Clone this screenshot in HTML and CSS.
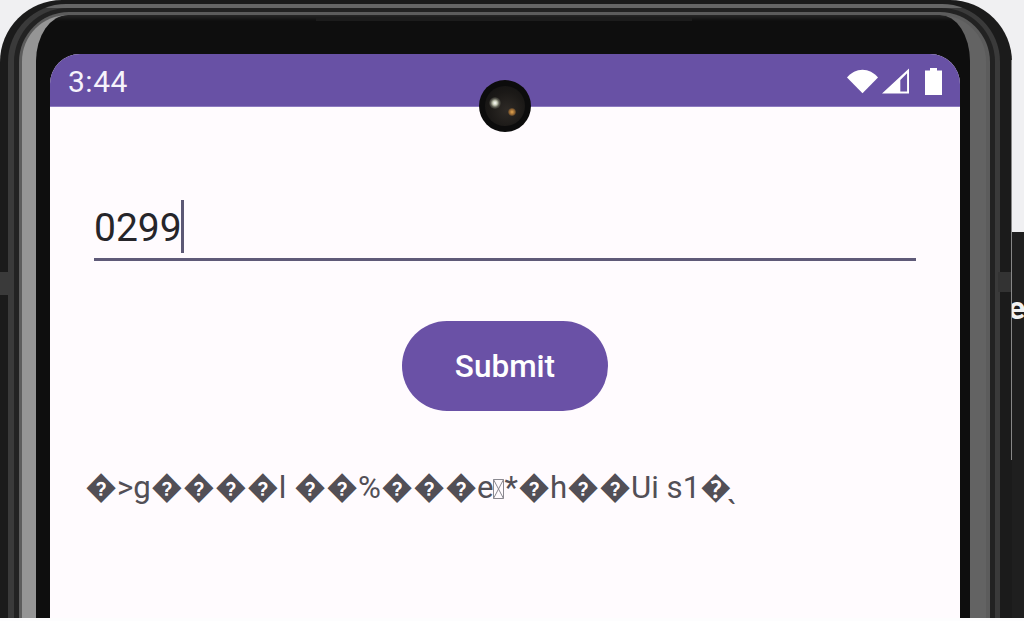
FILE: index.html
```html
<!DOCTYPE html>
<html lang="en">
<head>
<meta charset="utf-8">
<title>Submit</title>
<link rel="stylesheet" href="styles.css">
</head>
<body>
<div class="stage">
  <div class="backdrop"><span class="backdrop-text">e</span></div>
  <div class="device">
    <div class="ring ring-b">
      <div class="ring ring-c">
        <div class="ring ring-d">
          <div class="ring ring-e">
            <div class="ring ring-f">
              <div class="screen">
                <div class="status">
                  <span class="time">3:44</span>
                  <div class="status-icons">
                    <svg class="ic-wifi" viewBox="0 0 34 26"><path d="M0 8.500C4.500 3.200 10.500 0 17 0s12.500 3.200 17 8.500L17 26z"/></svg>
                    <svg class="ic-signal" viewBox="0 0 28 26"><path fill-rule="evenodd" d="M28 0v26H0zM26 5 19 12V24h7z"/></svg>
                    <svg class="ic-battery" viewBox="0 0 17 27"><path d="M5 0h7v2.500h5V27H0V2.500h5z"/></svg>
                  </div>
                </div>
                <div class="content">
                  <div class="field">
                    <span class="value">0299</span><span class="caret"></span>
                  </div>
                  <div class="actions"><button class="submit" type="button">Submit</button></div>
                  <p class="result">�&gt;g����l ��%���e<svg class="tofu" viewBox="0 0 11 20"><path d="M.5.5h10v19H.5zM.5.500l10 19M10.500.500l-10 19"/></svg>*�h��Ui s1�&#x316;</p>
                </div>
              </div>
            </div>
          </div>
        </div>
      </div>
    </div>
    <span class="side-btn side-btn-left"></span>
    <span class="side-btn side-btn-right"></span>
    <span class="top-strip"></span>
    <span class="edge-line"></span>
    <div class="camera"><span class="lens"></span><span class="glint glint-a"></span><span class="glint glint-b"></span></div>
  </div>
</div>
</body>
</html>
```
FILE: styles.css
```css
* { box-sizing: border-box; }
html, body { margin: 0; padding: 0; height: 100%; }
body { background: #fdfdfe; overflow: hidden; font-family: Roboto, "Noto Sans", "DejaVu Sans", sans-serif; }
.stage { position: relative; width: 1024px; height: 618px; overflow: hidden; background: #f0f0f2; }
.backdrop { position: absolute; right: 0; top: 232px; bottom: 0; width: 40px; background: #1f1f1f; overflow: hidden; }
.backdrop-text { position: absolute; left: 24px; top: 60px; color: #f2f2f2; font-size: 32px; font-weight: 700; line-height: 32px; }
.device { position: relative; width: 1012px; height: 760px; }
.ring { height: 100%; }
.device > .ring-b { border-radius: 62px 62px 0 0; background: #1b1b1b; padding: 4px 12px 0 8px; }
.ring-c { border-radius: 58px 58px 0 0; background: linear-gradient(180deg, #666 0, #666 4px, #3a3a3a 4px); padding: 4px 5px 0 6px; }
.ring-d { border-radius: 54px 54px 0 0; background: #222; padding: 4px 5px 0 5px; }
.ring-e { border-radius: 50px 50px 0 0; background: #5c5c5c; padding: 3px 4px 0 3px; }
.ring-f { border-radius: 46px 46px 0 0; background: linear-gradient(180deg, #262626 0, #0e0e0e 6px); border-left: 14px solid #959595; border-right: 16px solid #636363; padding: 39px 10px 0 14px; }
.screen { height: 100%; border-radius: 30px 30px 0 0; overflow: hidden; background: #fffbfe; }
.status { height: 53px; background: #6851a5; border-bottom: 1px solid #8d7bc0; display: flex; align-items: center; justify-content: space-between; padding: 0 18px 0 18px; color: #fff; }
.time { font-size: 30px; line-height: 34px; letter-spacing: .5px; color: #f6f3fb; margin-top: 3px; }
.status-icons { display: flex; align-items: center; gap: 4px; margin-top: 2px; }
.status-icons svg { display: block; fill: #fff; }
.ic-wifi { width: 31px; height: 25px; }
.ic-signal { width: 27px; height: 26px; }
.ic-battery { width: 17px; height: 27px; margin-left: 12px; }
.content { padding: 91px 44px 0; }
.field { height: 63px; display: flex; align-items: center; border-bottom: 3px solid #5f5a78; padding-bottom: 4px; }
.value { font-size: 39px; line-height: 46px; color: #26252a; margin-top: 4px; }
.caret { width: 3px; height: 53px; margin-left: -1px; background: #5c5875; }
.actions { display: flex; justify-content: center; padding-top: 60px; }
.submit { width: 206px; height: 90px; border: 0; border-radius: 45px; background: #6a51a6; color: #fff; font: 500 31.500px/36px Roboto, sans-serif; padding: 2px 0 0; }
.result { margin: 56px 0 0 -9px; font-size: 31.2px; line-height: 42px; color: #524f56; white-space: nowrap; }
.tofu { display: inline-block; width: 11px; height: 20px; fill: none; stroke: #8a8890; stroke-width: 1; vertical-align: -1px; }
.side-btn { position: absolute; top: 272px; height: 23px; background: #3a3a3a; }
.side-btn-left { left: 0; width: 8px; }
.side-btn-right { left: 998px; width: 13px; height: 20px; background: #333; }
.top-strip { position: absolute; left: 316px; top: 18px; width: 376px; height: 3px; background: #1c1c1c; }
.edge-line { position: absolute; left: 1011px; top: 60px; width: 1px; height: 400px; background: #888; }
.camera { position: absolute; left: 479px; top: 80px; width: 52px; height: 52px; border-radius: 50%; background: #0c0c0c; }
.lens { position: absolute; left: 6px; top: 6px; width: 40px; height: 40px; border-radius: 50%; background: radial-gradient(circle at 55% 60%, #2e2a26 0, #1b1917 55%, #111 100%); }
.glint { position: absolute; border-radius: 50%; }
.glint-a { left: 10px; top: 17px; width: 12px; height: 12px; background: radial-gradient(circle, #fff 0, #c8ccb8 25%, #5a5a50 50%, transparent 75%); }
.glint-b { left: 29px; top: 28px; width: 8px; height: 8px; background: radial-gradient(circle, #e8a850 0, #8a6030 50%, transparent 80%); }
```
